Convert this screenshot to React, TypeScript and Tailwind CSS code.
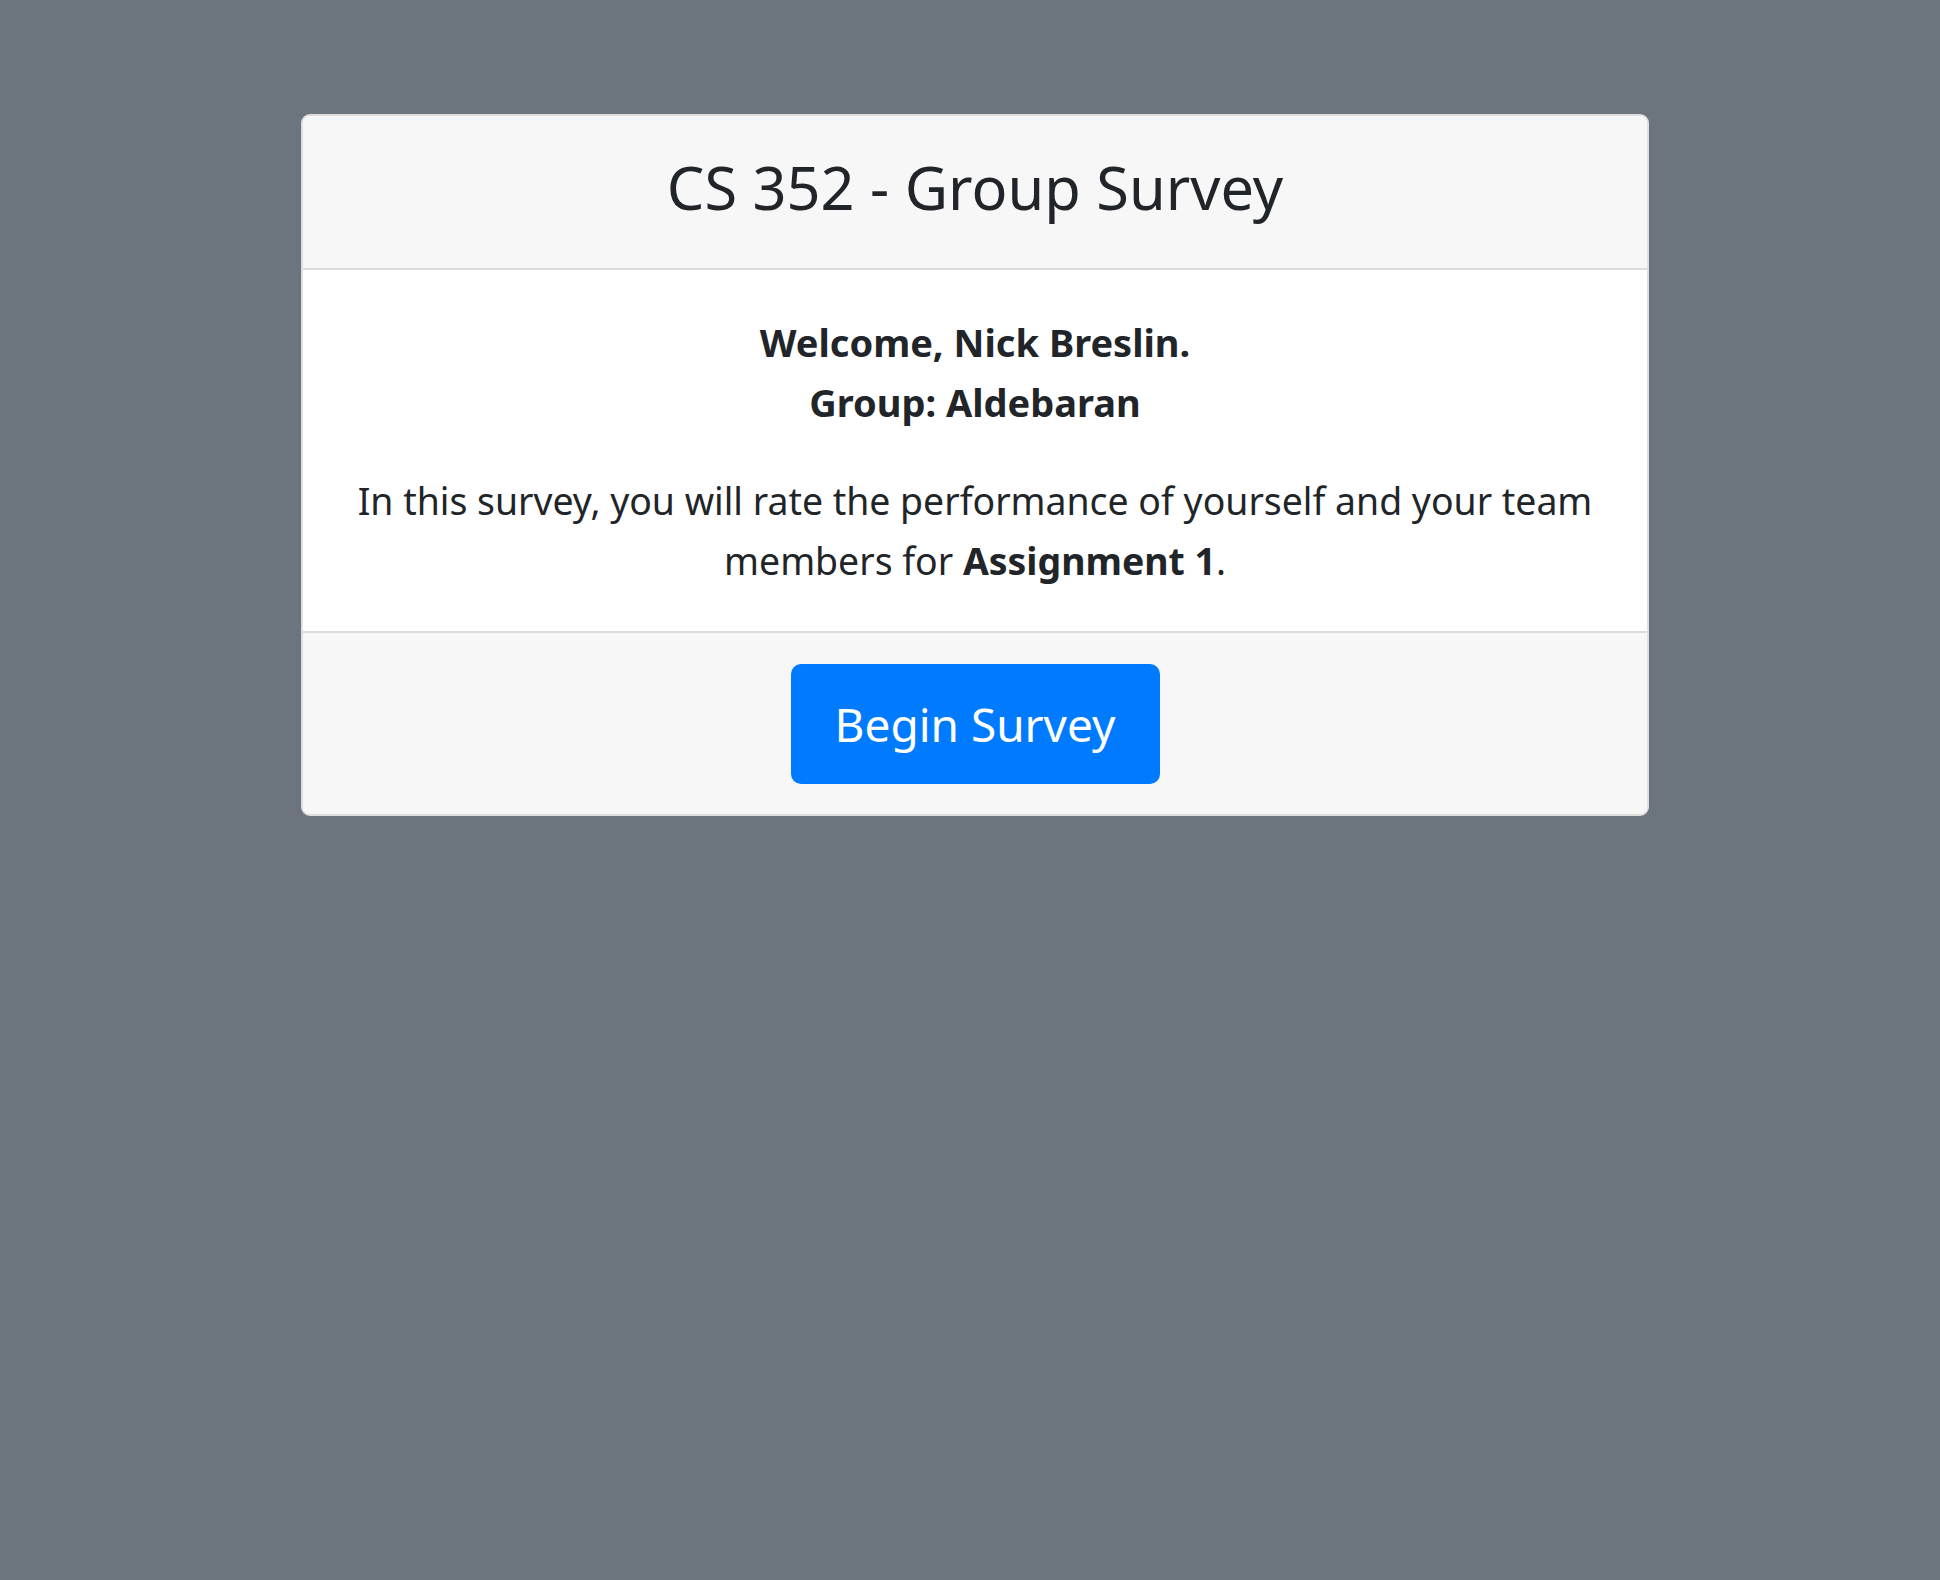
import React from "react";

const font = { fontFamily: '"Segoe UI", "Noto Sans", "Open Sans", sans-serif' };

export default function App() {
  return (
    <div className="min-h-[1580px] bg-[#6c757d] pl-[10px] pt-[114px] flex justify-center items-start" style={font}>
      <div className="w-[1348px] bg-white border-2 border-[#dfdfdf] rounded-[9px] overflow-hidden text-[#212529]">
        {/* header */}
        <div className="h-[154px] bg-[#f7f7f7] border-b-2 border-[#dcdcdc] flex items-center justify-center pb-[10px]">
          <h2 className="text-[59.5px] leading-[1.2] font-normal">CS 352 - Group Survey</h2>
        </div>

        {/* body */}
        <div className="h-[363px] border-b-2 border-[#dcdcdc] px-[40px] pt-[42px] text-center">
          <p className="text-[38px] leading-[60px] font-bold">
            Welcome, Nick Breslin.
            <br />
            Group: Aldebaran
          </p>
          <p className="mt-[39px] text-[37.4px] leading-[60px]">
            In this survey, you will rate the performance of yourself and your team members for{" "}
            <b>Assignment 1</b>.
          </p>
        </div>

        {/* footer */}
        <div className="h-[181px] bg-[#f7f7f7] flex items-center justify-center">
          <button
            type="button"
            className="w-[369px] h-[120px] rounded-[10px] bg-[#007bff] text-white text-[46px] leading-[60px]"
          >
            Begin Survey
          </button>
        </div>
      </div>
    </div>
  );
}
